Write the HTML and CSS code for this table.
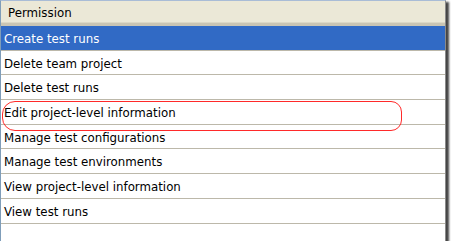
FILE: index.html
```html
<!DOCTYPE html>
<html lang="en">
<head>
    <meta charset="UTF-8">
    <title>Permissions</title>
    <link rel="stylesheet" href="styles.css">
</head>
<body>
    <div class="grid">
        <div class="grid-header">Permission</div>
        <div class="row selected">Create test runs</div>
        <div class="row">Delete team project</div>
        <div class="row">Delete test runs</div>
        <div class="row">Edit project-level information</div>
        <div class="row">Manage test configurations</div>
        <div class="row">Manage test environments</div>
        <div class="row">View project-level information</div>
        <div class="row">View test runs</div>

        <!-- hand-drawn highlight around one permission -->
        <div class="callout"></div>
    </div>
</body>
</html>
```

FILE: styles.css
```css
* {
    margin: 0;
    padding: 0;
    box-sizing: border-box;
}

body {
    background: #fff;
    font-family: 'DejaVu Sans', Tahoma, sans-serif;
    font-size: 11.8px;
    color: #000;
}

.grid {
    position: relative;
    width: 446px;
    height: 241px;
    background: #fff;
    border-top: 1px solid #a9bcd6;
    border-left: 1px solid #7f9db9;
    border-right: 1px solid #8a8a8a;
    box-shadow: 2px 3px 2px 1px #454545;
    display: flex;
    flex-direction: column;
}

.grid-header {
    height: 25px;
    padding: 2px 0 0 7px;
    display: flex;
    align-items: center;
    background: #ebe8d7;
    border-bottom: 3px solid #c9c5b4;
    box-shadow: inset 0 -1px 0 #dcd8c6;
}

.row {
    height: 24.7px;
    padding: 2px 0 0 3px;
    display: flex;
    align-items: center;
    border-bottom: 1px solid #bcb8aa;
}

.row.selected {
    background: #316ac5;
    color: #fff;
}

.callout {
    position: absolute;
    left: 1px;
    top: 100px;
    width: 400px;
    height: 30px;
    border: 1.5px solid #ff2a2a;
    border-radius: 13px 11px 11px 13px;
}
```
